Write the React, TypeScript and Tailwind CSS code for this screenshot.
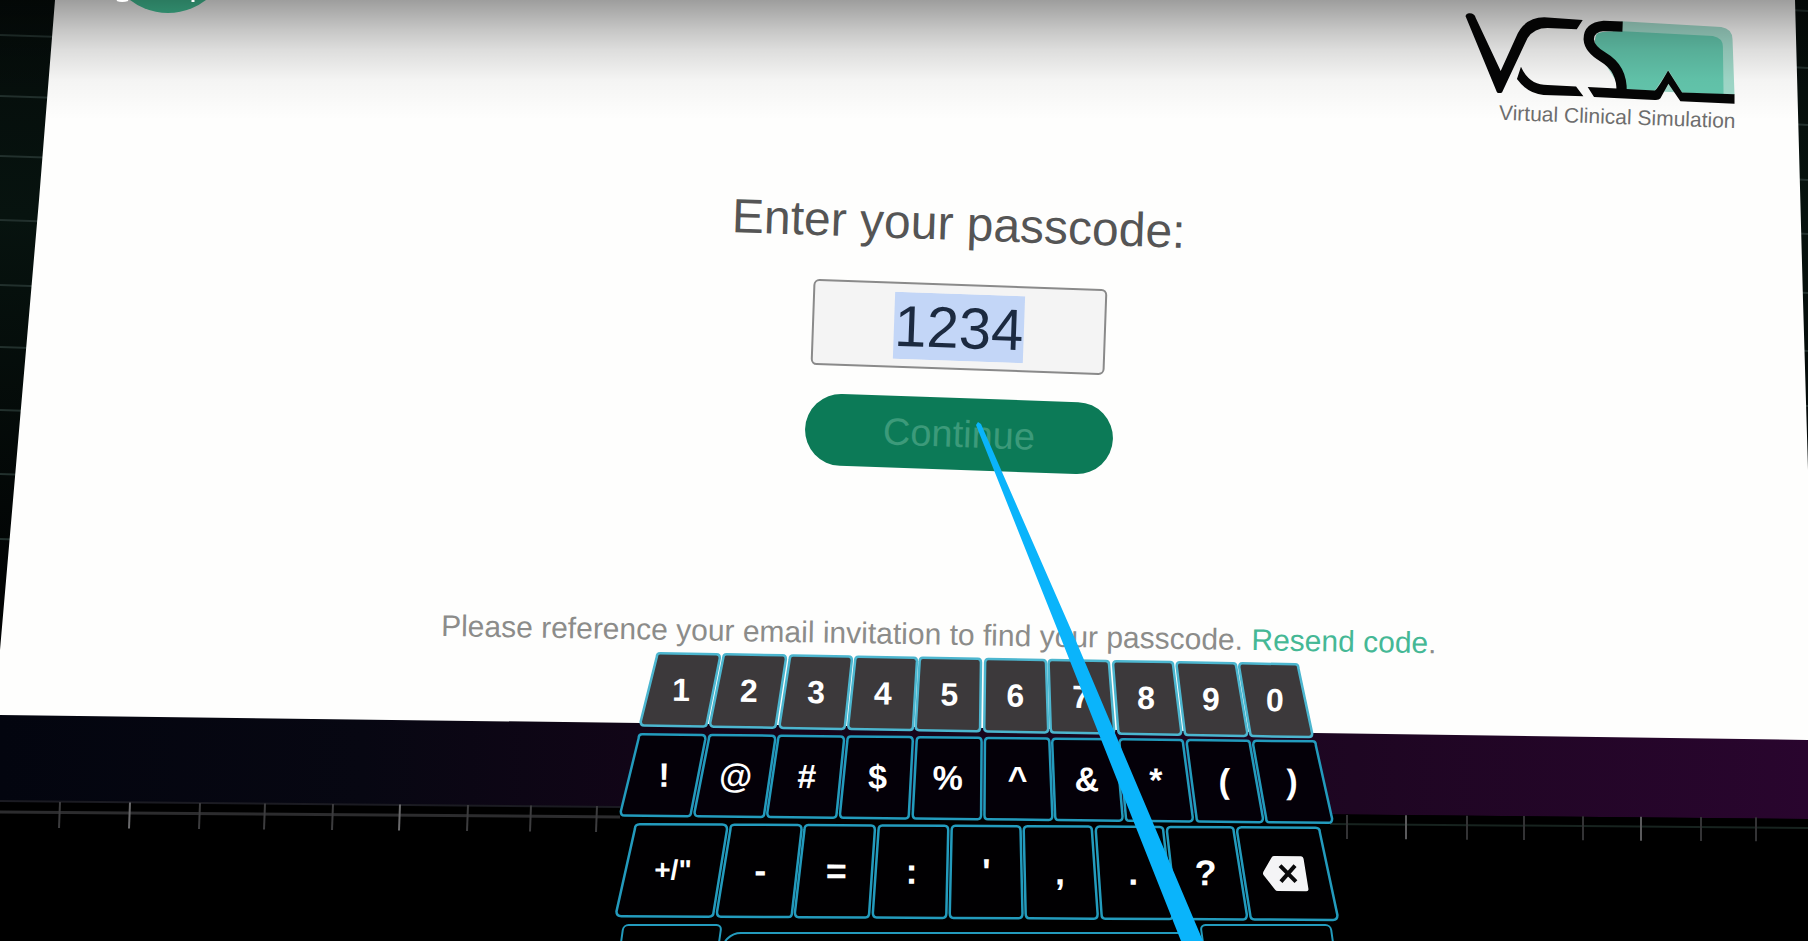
import { useEffect, useRef } from "react";

type KeySpec = { label: string; grow: number; size?: string; name?: string };

type RowSpec = {
  keys: KeySpec[];
  fill: string;
  stroke: string;
  width: number;
  inset: number;
  box: string;
};

const SANS = "font-['Liberation_Sans',Arial,sans-serif]";

// Keys narrow slightly from left to right, as the keyboard turns away from the viewer.
const plain = (chars: string): KeySpec[] =>
  chars.split("").map((label, i) => ({ label, grow: 103 - (i * 6) / (chars.length - 1) }));

const ROWS: RowSpec[] = [
  {
    keys: plain("1234567890"),
    fill: "#3c393b",
    stroke: "#4cb6cf",
    width: 660,
    inset: 15,
    box: "h-[74px] w-[660px] rotate-1 text-[32px]",
  },
  {
    keys: plain("!@#$%^&*()"),
    fill: "#040008",
    stroke: "#239bbd",
    width: 698,
    inset: 17,
    box: "h-[83px] w-[698px] rotate-[0.6deg] text-[34px]",
  },
  {
    keys: [
      { label: '+/"', grow: 132, size: "text-[28px]" },
      ...plain("-=:',.?"),
      { label: "", grow: 119, name: "Backspace" },
    ],
    fill: "#010002",
    stroke: "#239bbd",
    width: 706,
    inset: 18,
    box: "h-[94px] w-[706px] rotate-[0.3deg] text-[36px]",
  },
];

function BackspaceIcon() {
  return (
    <svg viewBox="0 0 48 38" className="relative h-[38px] w-12" aria-hidden="true">
      <path d="M12 1.5 H39 Q41 1.5 41.500 4 L46.500 34 Q47 36.500 44.500 36.500 H16 Q14 36.500 13 35 L1.500 20.500 Q.5 19 1.500 17 L9.500 3 Q10.500 1.500 12 1.500 Z" fill="#f4f4f6" />
      <path d="M18 11 L34 27 M33 11 L19 27" stroke="#08080a" strokeWidth="4" />
    </svg>
  );
}

function KeyRow({ row }: { row: RowSpec }) {
  const total = row.keys.reduce((sum, key) => sum + key.grow, 0);
  let start = 0;
  return (
    <div className={`flex ${row.box}`}>
      {row.keys.map((key) => {
        const from = start / total;
        start += key.grow;
        const to = start / total;
        // The far edge of each row is shorter than the near one, so keys lean toward the row's centre.
        const widthPx = row.width * (to - from);
        const lean = (at: number) => ((0.5 - at) * row.inset * 100) / widthPx;
        const gap = 170 / widthPx;
        const tl = lean(from) + gap;
        const tr = 100 + lean(to) - gap;
        const br = 100 - lean(to) - gap;
        const bl = gap - lean(from);
        const r = 5;
        const d =
          `M${tl + r} 1 L${tr - r} 1 Q${tr} 1 ${tr} ${1 + r} L${br} ${99 - r} Q${br} 99 ${br - r} 99 ` +
          `L${bl + r} 99 Q${bl} 99 ${bl} ${99 - r} L${tl} ${1 + r} Q${tl} 1 ${tl + r} 1 Z`;
        return (
          <button
            key={key.label || key.name}
            type="button"
            aria-label={key.name}
            style={{ flexGrow: key.grow }}
            className="relative flex basis-0 items-center justify-center font-bold text-white"
          >
            <svg
              viewBox="0 0 100 100"
              preserveAspectRatio="none"
              className="absolute inset-0 h-full w-full overflow-visible"
              aria-hidden="true"
            >
              <path d={d} fill={row.fill} stroke={row.stroke} strokeWidth="2.500" vectorEffect="non-scaling-stroke" />
            </svg>
            {key.name ? <BackspaceIcon /> : <span className={`relative ${key.size ?? ""}`}>{key.label}</span>}
          </button>
        );
      })}
    </div>
  );
}

function Keyboard() {
  return (
    <div className="flex flex-col items-center gap-[5px]">
      {ROWS.map((row) => (
        <KeyRow key={row.fill} row={row} />
      ))}
      <div className="flex h-20 w-[720px] gap-1">
        <button type="button" aria-label="Letters" className="w-[100px] skew-x-[-8deg] rounded-md border-2 border-[#239bbd] bg-black" />
        <button type="button" aria-label="Space" className="mt-2 flex-1 rounded-[20px] border-2 border-[#239bbd] bg-black" />
        <button type="button" aria-label="Enter" className="w-[132px] skew-x-[8deg] rounded-md border-2 border-[#239bbd] bg-black" />
      </div>
    </div>
  );
}

const LEFT_LINES = [36, 97, 157, 221, 286, 348, 411, 475, 540];
const RIGHT_LINES = [10, 67, 124, 179, 233, 292, 350, 405];
const LEFT_TICKS = [60, 130, 200, 265, 333, 400, 468, 531, 597];
const RIGHT_TICKS = [1347, 1406, 1467, 1524, 1583, 1641, 1701, 1756];

function Scene() {
  return (
    <svg
      viewBox="0 0 1808 941"
      preserveAspectRatio="none"
      className="absolute inset-0 h-full w-full"
      aria-hidden="true"
    >
      <defs>
        <linearGradient id="wall" x1="0" x2="0" y1="0" y2="1">
          <stop offset="0" stopColor="#050c0a" />
          <stop offset="0.3" stopColor="#07130f" />
          <stop offset="0.8" stopColor="#020404" />
        </linearGradient>
        <linearGradient id="band" x1="0" x2="1" y1="0" y2="0">
          <stop offset="0" stopColor="#03050f" />
          <stop offset="0.2" stopColor="#070712" />
          <stop offset="0.35" stopColor="#110517" />
          <stop offset="0.75" stopColor="#1e0622" />
          <stop offset="1" stopColor="#29052e" />
        </linearGradient>
      </defs>
      <rect width="1808" height="720" fill="url(#wall)" />
      {LEFT_LINES.map((y) => (
        <path key={y} d={`M0 ${y - 1} L60 ${y + 1}`} stroke="#22302d" strokeWidth="2" />
      ))}
      {RIGHT_LINES.map((y) => (
        <path key={y} d={`M1790 ${y} L1808 ${y + 1}`} stroke="#22302d" strokeWidth="2" />
      ))}
      <polygon points="0,710 1808,735 1808,819 0,801" fill="url(#band)" />
      <polygon points="0,801 1808,819 1808,941 0,941" fill="#000000" />
      <path d="M0 801 L620 807" stroke="#1b1b22" strokeWidth="2" />
      <path d="M0 812 L620 817" stroke="#2c2c2e" strokeWidth="3" />
      <path d="M1330 824 L1808 828" stroke="#17231f" strokeWidth="2" />
      {LEFT_TICKS.map((x, i) => (
        <path key={x} d={`M${x} ${802 + i / 2} L${x - 1} ${828 + i / 2}`} stroke={i % 4 === 1 ? "#6a6a6c" : "#3c3c3e"} strokeWidth="2" />
      ))}
      {RIGHT_TICKS.map((x, i) => (
        <path key={x} d={`M${x} ${815 + i / 3} V${839 + i / 3}`} stroke={i % 4 === 1 ? "#5a5a5c" : "#333335"} strokeWidth="2" />
      ))}
      <polygon points="55,0 39,200 0,650 0,715 640,723 1315,733 1808,740 1808,470 1803,300 1799,150 1795,0" fill="#fefefd" />
      <circle cx="168" cy="-49" r="62" fill="#45c79b" />
    </svg>
  );
}

function TopShade() {
  return (
    <>
      <div className="pointer-events-none absolute inset-x-0 top-0 h-32 bg-[linear-gradient(to_bottom,rgba(0,0,0,0.38),rgba(0,0,0,0.22)_30px,rgba(0,0,0,0.13)_50px,rgba(0,0,0,0.04)_80px,rgba(0,0,0,0)_120px)]" />
      <svg viewBox="0 0 100 4" className="pointer-events-none absolute top-0 left-[112px] h-1 w-[100px]" aria-hidden="true">
        <path d="M5 0 Q10 2 16 0" fill="none" stroke="#ffffff" strokeWidth="2" />
        <path d="M81 0 V2" stroke="#ffffff" strokeWidth="3" />
      </svg>
    </>
  );
}

function Logo() {
  return (
    <div className="flex flex-col items-end">
      <svg viewBox="72 34 816 280" className="h-[93px] w-[272px]" aria-hidden="true">
        <path d="M545 62 L845 79 Q878 84 879 116 L885 284 L545 268 L470 150 Z" fill="#a2dccc" />
        <path d="M470 100 Q480 90 548 92 L820 106 Q850 112 850 138 L852 282 L727 276 L686 208 L645 270 L555 266 Q556 210 500 176 Q450 140 470 100 Z" fill="#64c8ae" />
        <path d="M75 46 Q78 36 88 38 Q102 38 106 52 L181 212 L228 108 Q250 52 312 50 L428 58 L410 86 L322 82 Q282 82 262 112 L185 276 Q177 280 170 276 Z" fill="#050505" />
        <path d="M242 199 Q266 254 322 254 L408 258 L430 288 L310 284 Q262 280 230 236 Z" fill="#050505" />
        <path d="M548 78 L492 76 Q446 80 446 116 Q448 146 490 170 Q548 204 545 276" fill="none" stroke="#050505" strokeWidth="31" />
        <path d="M443 260 L560 266 L645 270 Q652 268 685 210 L727 276 L885 282 L885 310 L722 303 L686 250 L662 294 Q658 300 645 299 L462 290 Z" fill="#050505" />
      </svg>
      <p className="rotate-2 text-[21px] leading-6 text-[#6e6e6e]">Virtual Clinical Simulation</p>
    </div>
  );
}

function PointerBeam() {
  return (
    <svg viewBox="0 0 1808 941" preserveAspectRatio="none" className="pointer-events-none absolute inset-0 h-full w-full" aria-hidden="true">
      <polygon points="976,425 978,422 981,424 1076,641 1203,941 1181,941 1062,641" fill="#0ab4fb" />
    </svg>
  );
}

export default function App() {
  const passcode = useRef<HTMLInputElement>(null);

  useEffect(() => {
    passcode.current?.focus();
    passcode.current?.select();
  }, []);

  return (
    <div className={`relative h-screen overflow-hidden bg-black ${SANS}`}>
      <Scene />
      <div className="relative flex flex-col">
        <header className="flex h-36 justify-end pt-3 pr-[72px]">
          <Logo />
        </header>
        <main className="flex flex-col items-center">
          <form className="flex flex-col items-center pt-12 pl-[110px]" onSubmit={(e) => e.preventDefault()}>
            <label htmlFor="passcode" className="rotate-2 text-5xl leading-[64px] text-[#555555]">
              Enter your passcode:
            </label>
            <input
              id="passcode"
              ref={passcode}
              type="text"
              inputMode="numeric"
              defaultValue="1234"
              className="mt-7 h-[86px] w-[294px] rotate-2 rounded-md border-2 border-[#8a8a8a] bg-[#f4f4f4] text-center text-[58px] leading-[66px] text-[#1c2a40] caret-transparent outline-none selection:bg-[#c3d6f7] selection:text-[#1c2a40]"
            />
            <button type="submit" className="mt-7 h-[72px] w-[308px] rotate-2 rounded-full bg-[#0c7a57] text-[38px] leading-[64px] text-[#3c9a7a]">
              Continue
            </button>
          </form>
          <p className="mt-36 rotate-1 pl-[70px] text-3xl leading-10 whitespace-nowrap text-[#8c8c8a]">
            Please reference your email invitation to find your passcode.{" "}
            <a href="#resend" className="text-[#45b895]">Resend code</a>.
          </p>
          <section aria-label="Keyboard" className="mt-1 pl-[146px]">
            <Keyboard />
          </section>
        </main>
      </div>
      <PointerBeam />
      <TopShade />
    </div>
  );
}
